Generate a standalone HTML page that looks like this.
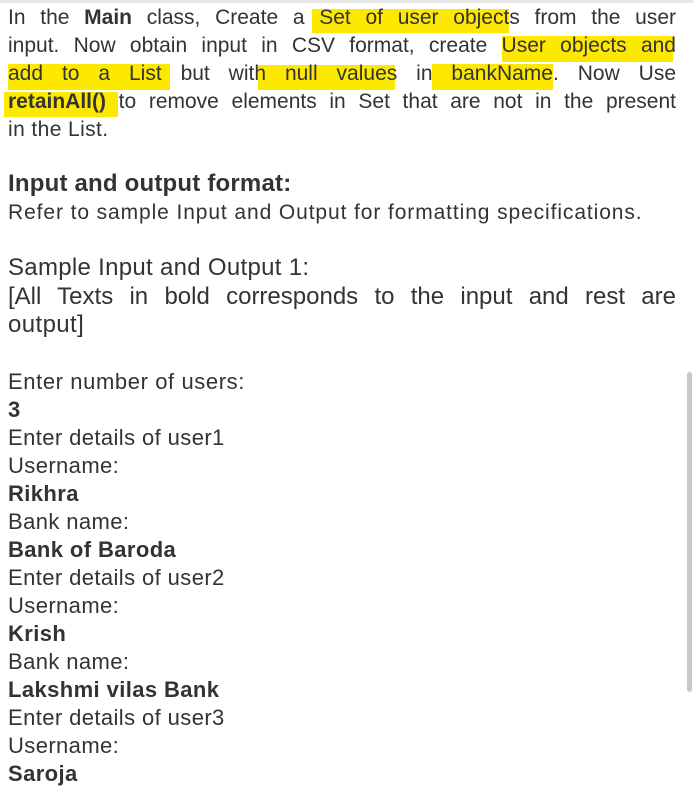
<!DOCTYPE html>
<html><head><meta charset="utf-8"><style>
body{margin:0;width:694px;height:790px;background:#fff;overflow:hidden;position:relative;font-family:"Liberation Sans",sans-serif;color:#333;}
.top{position:absolute;left:0;top:0;width:694px;height:3px;background:#e8e8e8;}
.hl{position:absolute;background:#fde800;}
.l{position:absolute;left:8px;width:668px;font-size:21px;line-height:28px;white-space:nowrap;letter-spacing:0.4px;}
.j{text-align:justify;text-align-last:justify;white-space:normal;letter-spacing:0;}
.b{font-weight:bold;}
.sb{position:absolute;left:687px;top:372px;width:5px;height:320px;background:#c8c8c8;border-radius:3px;}
</style></head><body>
<div class="top"></div>
<div class="hl" style="left:312px;top:9px;width:197px;height:24px"></div>
<div class="hl" style="left:502px;top:36px;width:171px;height:26px"></div>
<div class="hl" style="left:8px;top:64px;width:162px;height:26px"></div>
<div class="hl" style="left:258px;top:65px;width:137px;height:25px"></div>
<div class="hl" style="left:432px;top:64px;width:121px;height:26px"></div>
<div class="hl" style="left:4px;top:92px;width:114px;height:25px"></div>
<div class="l j" style="top:4px">In the <span class="b">Main</span> class, Create a Set of user objects from the user</div>
<div class="l j" style="top:32px">input. Now obtain input in CSV format, create User objects and</div>
<div class="l j" style="top:60px">add to a List but with null values in bankName. Now Use</div>
<div class="l j" style="top:88px"><span class="b">retainAll()</span> to remove elements in Set that are not in the present</div>
<div class="l" style="top:116px">in the List.</div>
<div class="l b" style="top:169px;font-size:24px;line-height:30px;letter-spacing:0.2px">Input and output format:</div>
<div class="l" style="top:199px;letter-spacing:0.9px">Refer to sample Input and Output for formatting specifications.</div>
<div class="l" style="top:253px;font-size:24px;line-height:30px;letter-spacing:0.3px">Sample Input and Output 1:</div>
<div class="l j" style="top:282px;font-size:24px;line-height:30px">[All Texts in bold corresponds to the input and rest are</div>
<div class="l" style="top:310px;font-size:24px;line-height:30px">output]</div>
<div class="l" style="top:368px;font-size:22px;letter-spacing:0.6px">Enter number of users:</div>
<div class="l b" style="top:396px;font-size:22px">3</div>
<div class="l" style="top:424px;font-size:22px">Enter details of user1</div>
<div class="l" style="top:452px;font-size:22px">Username:</div>
<div class="l b" style="top:480px;font-size:22px">Rikhra</div>
<div class="l" style="top:508px;font-size:22px">Bank name:</div>
<div class="l b" style="top:536px;font-size:22px">Bank of Baroda</div>
<div class="l" style="top:564px;font-size:22px">Enter details of user2</div>
<div class="l" style="top:592px;font-size:22px">Username:</div>
<div class="l b" style="top:620px;font-size:22px">Krish</div>
<div class="l" style="top:648px;font-size:22px">Bank name:</div>
<div class="l b" style="top:676px;font-size:22px">Lakshmi vilas Bank</div>
<div class="l" style="top:704px;font-size:22px">Enter details of user3</div>
<div class="l" style="top:732px;font-size:22px">Username:</div>
<div class="l b" style="top:760px;font-size:22px">Saroja</div>
<div class="sb"></div>
</body></html>
